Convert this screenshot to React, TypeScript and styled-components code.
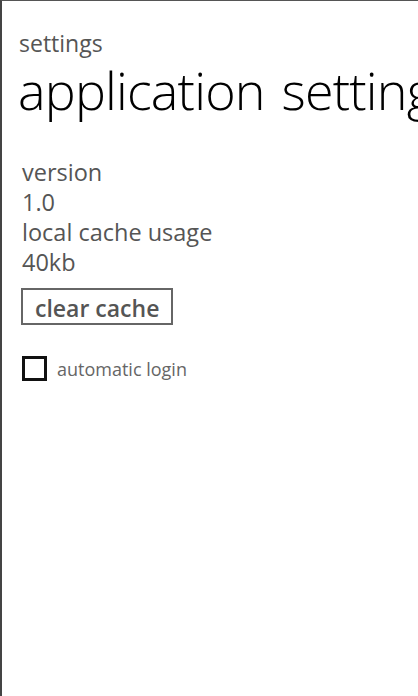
import styled, { createGlobalStyle } from "styled-components";

const GlobalStyle = createGlobalStyle`
  html, body {
    margin: 0;
    padding: 0;
    background: #ffffff;
  }
  body {
    font-family: "Open Sans", "Noto Sans", sans-serif;
  }
`;

const Frame = styled.div`
  width: 418px;
  height: 696px;
  box-sizing: border-box;
  border-top: 1px solid #555555;
  border-left: 2px solid #444444;
  overflow: hidden;
  background: #ffffff;
`;

const Header = styled.header`
  padding: 28px 0 0 17px;
`;

const AppName = styled.div`
  font-size: 23px;
  line-height: 28px;
  color: #555555;
`;

const PageTitle = styled.h1`
  margin: 0 0 0 -1px;
  font-size: 52px;
  font-weight: 300;
  line-height: 66px;
  letter-spacing: -0.8px;
  word-spacing: 4px;
  color: #000000;
  white-space: nowrap;
`;

const Content = styled.main`
  padding: 34px 0 0 20px;
  display: flex;
  flex-direction: column;
  align-items: flex-start;
`;

const InfoLine = styled.div`
  font-size: 23.5px;
  line-height: 30px;
  color: #555555;
`;

const ClearButton = styled.button`
  margin: 11px 0 0 -1px;
  padding: 2px 12px 0;
  height: 37px;
  border: 2px solid #666666;
  background: #ffffff;
  font-family: inherit;
  font-size: 23px;
  font-weight: 600;
  line-height: 30px;
  color: #555555;
`;

const CheckRow = styled.label`
  margin-top: 31px;
  display: flex;
  align-items: center;
  gap: 10px;
  font-size: 18px;
  color: #666666;
`;

const Box = styled.span`
  width: 19px;
  height: 19px;
  border: 3px solid #111111;
  box-sizing: content-box;
`;

export default function App() {
  return (
    <>
      <GlobalStyle />
      <Frame>
        <Header>
          <AppName>settings</AppName>
          <PageTitle>application settings</PageTitle>
        </Header>
        <Content>
          <InfoLine>version</InfoLine>
          <InfoLine>1.0</InfoLine>
          <InfoLine>local cache usage</InfoLine>
          <InfoLine>40kb</InfoLine>
          <ClearButton>clear cache</ClearButton>
          <CheckRow>
            <Box />
            automatic login
          </CheckRow>
        </Content>
      </Frame>
    </>
  );
}
